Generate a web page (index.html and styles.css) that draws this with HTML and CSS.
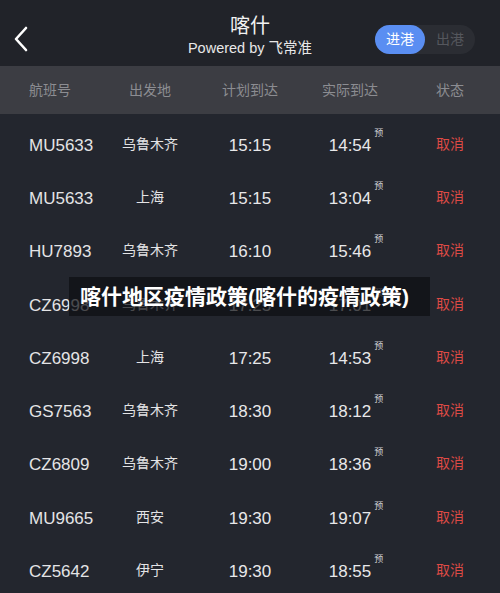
FILE: index.html
```html
<!DOCTYPE html>
<html lang="zh-CN">
<head>
    <meta charset="UTF-8">
    <title>喀什 航班</title>
    <link rel="stylesheet" href="styles.css">
</head>
<body>

    <!-- Top Bar -->
    <header class="topbar">
        <span class="back">
            <svg width="16" height="26" viewBox="0 0 16 26"><path d="M13 2 L3 13 L13 24" fill="none" stroke="#fff" stroke-width="2.6" stroke-linecap="round" stroke-linejoin="round"/></svg>
        </span>
        <div class="title">
            <div class="city">喀什</div>
            <div class="powered">Powered by 飞常准</div>
        </div>
        <div class="toggle">
            <span class="tab active">进港</span>
            <span class="tab">出港</span>
        </div>
    </header>

    <!-- Column Names -->
    <div class="cols">
        <span class="first">航班号</span>
        <span>出发地</span>
        <span>计划到达</span>
        <span>实际到达</span>
        <span>状态</span>
    </div>

    <!-- Flights -->
    <div class="list">
        <div class="row"><span class="num">MU5633</span><span class="city-name">乌鲁木齐</span><span class="time">15:15</span><span class="time">14:54<sup>预</sup></span><span class="status">取消</span></div>
        <div class="row"><span class="num">MU5633</span><span class="city-name">上海</span><span class="time">15:15</span><span class="time">13:04<sup>预</sup></span><span class="status">取消</span></div>
        <div class="row"><span class="num">HU7893</span><span class="city-name">乌鲁木齐</span><span class="time">16:10</span><span class="time">15:46<sup>预</sup></span><span class="status">取消</span></div>
        <div class="row"><span class="num">CZ6998</span><span class="city-name">乌鲁木齐</span><span class="time">17:25</span><span class="time">17:01<sup>预</sup></span><span class="status">取消</span></div>
        <div class="row"><span class="num">CZ6998</span><span class="city-name">上海</span><span class="time">17:25</span><span class="time">14:53<sup>预</sup></span><span class="status">取消</span></div>
        <div class="row"><span class="num">GS7563</span><span class="city-name">乌鲁木齐</span><span class="time">18:30</span><span class="time">18:12<sup>预</sup></span><span class="status">取消</span></div>
        <div class="row"><span class="num">CZ6809</span><span class="city-name">乌鲁木齐</span><span class="time">19:00</span><span class="time">18:36<sup>预</sup></span><span class="status">取消</span></div>
        <div class="row"><span class="num">MU9665</span><span class="city-name">西安</span><span class="time">19:30</span><span class="time">19:07<sup>预</sup></span><span class="status">取消</span></div>
        <div class="row"><span class="num">CZ5642</span><span class="city-name">伊宁</span><span class="time">19:30</span><span class="time">18:55<sup>预</sup></span><span class="status">取消</span></div>
    </div>

    <!-- Caption over the picture -->
    <div class="caption">喀什地区疫情政策(喀什的疫情政策)</div>

</body>
</html>
```

FILE: styles.css
```css
body {
    margin: 0;
    width: 500px;
    height: 593px;
    overflow: hidden;
    position: relative;
    background-color: #23262e;
    color: #e6e6e8;
    font-family: "Liberation Sans", "Noto Sans CJK SC", sans-serif;
}

/* Top Bar */
.topbar {
    height: 66px;
    background-color: #212329;
    display: flex;
    align-items: center;
    position: relative;
}

.back {
    display: flex;
    margin-left: 13px;
    margin-top: 12px;
}

.title {
    position: absolute;
    left: 0;
    right: 0;
    top: 13px;
    text-align: center;
    pointer-events: none;
}

.city {
    font-size: 20px;
    line-height: 26px;
    color: #f2f2f2;
}

.powered {
    font-size: 14.5px;
    line-height: 19px;
    color: #e8e8e8;
}

.toggle {
    margin-left: auto;
    margin-right: 25px;
    margin-top: 12px;
    display: flex;
    background-color: #2b2d33;
    border-radius: 15px;
    height: 29px;
    width: 100px;
}

.tab {
    width: 50px;
    display: flex;
    align-items: center;
    justify-content: center;
    font-size: 14px;
    padding-bottom: 2px;
    box-sizing: border-box;
    color: #55575d;
    border-radius: 15px;
}

.tab.active {
    background-color: #5a8ef2;
    color: #ffffff;
}

/* Column Names */
.cols {
    height: 48px;
    background-color: #3c3d43;
    display: grid;
    grid-template-columns: repeat(5, 100px);
    align-items: center;
    font-size: 14px;
    line-height: 20px;
    color: #8c8d92;
    text-align: center;
}

.cols .first,
.row .num {
    text-align: left;
    padding-left: 29px;
}

/* Flights */
.list {
    padding-top: 5px;
}

.row {
    height: 53.3px;
    display: grid;
    grid-template-columns: repeat(5, 100px);
    align-items: center;
    text-align: center;
    line-height: 20px;
}

.num {
    font-size: 17px;
    color: #e4e4e6;
}

.city-name {
    font-size: 14px;
    padding-bottom: 4px;
    color: #e4e4e6;
}

.time {
    font-size: 17px;
    color: #e8e8ea;
    position: relative;
}

.time sup {
    position: absolute;
    top: -9px;
    margin-left: 3px;
    font-size: 9px;
    line-height: 12px;
    color: #d0d0d4;
}

.status {
    font-size: 14px;
    padding-bottom: 4px;
    color: #de4a45;
}

/* Caption */
.caption {
    position: absolute;
    left: 69px;
    top: 277px;
    width: 361px;
    height: 39px;
    background-color: rgba(14, 15, 19, 0.72);
    color: #ffffff;
    font-size: 21px;
    font-weight: bold;
    line-height: 39px;
    padding-left: 11px;
    box-sizing: border-box;
}
```
